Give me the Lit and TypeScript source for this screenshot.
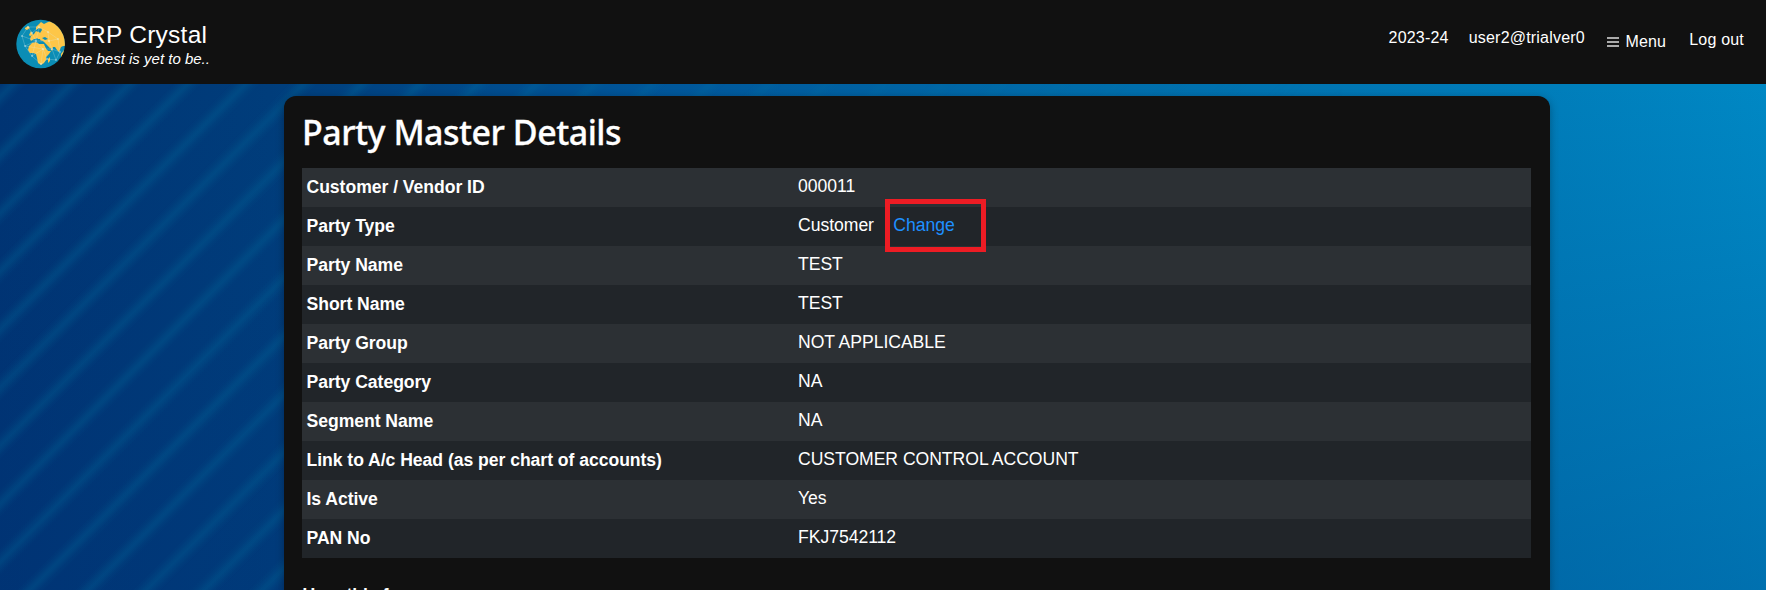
import { LitElement, html, css, svg } from "lit";
import { customElement, state } from "lit/decorators.js";

interface Field {
  label: string;
  value: string;
  action?: string;
}

@customElement("brand-globe")
class BrandGlobe extends LitElement {
  static styles = css`
    :host { display: block; width: 50px; height: 50px; flex: none; }
    svg { display: block; }
  `;

  private nodes = [
    [6, 17], [12, 8], [20, 22], [9, 27], [16, 37], [25, 45], [31, 40],
    [36, 30], [44, 33], [40, 41], [27, 30], [16, 14], [23, 8], [32, 13], [42, 20], [33, 22],
  ];

  render() {
    const links = [
      [0, 1], [0, 3], [0, 2], [1, 11], [11, 2], [11, 12], [2, 3], [3, 4], [4, 5], [5, 6], [6, 10],
      [10, 2], [10, 7], [7, 8], [8, 9], [9, 6], [2, 4], [4, 10], [12, 13], [13, 14], [14, 8],
      [13, 15], [15, 7], [15, 2], [1, 12], [3, 10], [7, 9], [14, 15], [12, 2], [5, 10],
    ];
    return html`<svg width="50" height="50" viewBox="0 0 50 50">
      <defs><clipPath id="disc"><circle cx="24.6" cy="25" r="24.3" /></clipPath></defs>
      <g clip-path="url(#disc)">
        <rect width="50" height="50" fill="#0b8db5" />
        <g fill="#fdc648">
          <path d="M22 6 25 3 28 5 32 3 38 1 50 10V27L47 27 45 28 43 33 41 31 39 28 37 28 36 32 33 28 30 25 29 24 25 23 24 20 21 20 18 20 15 22 14 20 15 17 18 15 20 12 22 13 24 10 23 9 20 11 20 8Z" />
          <path d="M13 27 16 24 20 23 23 25 28 25 30 29 32 32 35 32 33 35 30 38 30 41 28 44 25 46 22 44 21 39 20 35 17 34 14 34 12 31Z" />
          <path d="M32 40 34 38 34 42 32 44Z" />
          <path d="M45 35 48 31 48 37 45 41Z" />
          <path d="M9 9 12 7 14 9 11 11 9 10Z" />
          <path d="M13 16 15 12 17 16 14 17Z" />
        </g>
        <g fill="#0b8db5">
          <path d="M18 21 21 19 23 21 27 22 29 24 24 24 20 23Z" />
          <path d="M26 19 29 18 32 20 29 21Z" />
          <path d="M28 25 32 30 36 29 34 31 31 31Z" />
          <path d="M22 12 25 9 26 11 24 14Z" />
        </g>
        <g stroke="#d9eff0" stroke-width=".45" opacity=".55">
          ${links.map(([a, b]) => svg`<line
            x1=${this.nodes[a][0]} y1=${this.nodes[a][1]}
            x2=${this.nodes[b][0]} y2=${this.nodes[b][1]} />`)}
        </g>
        <g fill="#e9fafa" opacity=".75">
          ${this.nodes.map(([x, y]) => svg`<circle cx=${x} cy=${y} r=".8" />`)}
        </g>
      </g>
    </svg>`;
  }
}

@customElement("top-bar")
class TopBar extends LitElement {
  static styles = css`
    :host {
      display: flex;
      justify-content: space-between;
      box-sizing: border-box;
      height: 84px;
      padding: 19px 22px 0 16px;
      background: #111;
      color: #fff;
    }
    .brand { display: flex; gap: 5.5px; }
    .name { font-size: 24.5px; line-height: 28px; margin-top: 2px; letter-spacing: 0.25px; }
    .tag { font-size: 15px; line-height: 18px; font-style: italic; margin-top: 1px; }
    nav { display: flex; font-size: 16px; line-height: 20px; letter-spacing: 0.2px; }
    .year { margin: 9px 20px 0 0; }
    .user { margin: 9px 22px 0 0; }
    .menu { display: flex; align-items: center; align-self: flex-start; gap: 6.5px; margin: 13px 23px 0 0; }
    .bars { display: block; }
    .out { margin-top: 11px; }
  `;

  render() {
    return html`
      <div class="brand">
        <brand-globe></brand-globe>
        <div>
          <div class="name">ERP Crystal</div>
          <div class="tag">the best is yet to be..</div>
        </div>
      </div>
      <nav>
        <span class="year">2023-24</span>
        <span class="user">user2@trialver0</span>
        <span class="menu">
          <svg class="bars" width="12" height="10" viewBox="0 0 12 10">
            <path d="M0 1h12M0 5h12M0 9h12" stroke="#aaa" stroke-width="2" />
          </svg>
          <span>Menu</span>
        </span>
        <span class="out">Log out</span>
      </nav>
    `;
  }
}

@customElement("app-root")
class AppRoot extends LitElement {
  static styles = css`
    :host {
      display: block;
      position: relative;
      height: 590px;
      overflow: hidden;
      font-family: "Liberation Sans", Arial, sans-serif;
      background:
        linear-gradient(to bottom, rgba(0, 50, 120, 0) 84px, rgba(0, 50, 120, 0.27) 590px),
        linear-gradient(to right, #003473 0, #003d7b 270px, #00569a 650px, #006ba9 1050px, #007bb8 1500px, #0088c4 1766px);
    }
    .stripes {
      position: absolute;
      inset: 0;
      background: repeating-linear-gradient(135deg,
        rgba(0, 120, 165, 0) 0, rgba(0, 120, 165, 0) 17px,
        rgba(0, 120, 165, 0.07) 21px, rgba(0, 120, 165, 0.2) 25.5px,
        rgba(0, 120, 165, 0.24) 27.5px, rgba(0, 120, 165, 0.2) 29.5px,
        rgba(0, 120, 165, 0.07) 34px, rgba(0, 120, 165, 0) 38px, rgba(0, 120, 165, 0) 41.1px);
      mask-image: linear-gradient(to right, #000 500px, transparent 1350px);
    }
    .page { position: relative; }
    .card {
      box-sizing: border-box;
      width: 1266px;
      height: 560px;
      margin: 12px auto 0 284px;
      padding: 14px 19px 0 18px;
      border-radius: 12px;
      background: #111;
      color: #fff;
      box-shadow: 0 2px 8px rgba(0, 0, 0, 0.3);
    }
    h1 {
      margin: 0 0 13px;
      font: 500 34px/45px "Noto Sans", "Open Sans", sans-serif;
      letter-spacing: -0.5px;
      white-space: nowrap;
      -webkit-text-stroke: 0.3px #fff;
    }
    .row {
      display: grid;
      grid-template-columns: 491.5px 1fr;
      height: 39px;
      padding-left: 4.5px;
      box-sizing: border-box;
      background: #212529;
      font-size: 17.6px;
      line-height: 27px;
    }
    .row:nth-child(odd) { background: #2c3034; }
    .label { font-weight: 700; padding-top: 6px; letter-spacing: -0.04px; }
    .value { padding-top: 5px; display: flex; letter-spacing: -0.04px; }
    .action {
      display: flex;
      box-sizing: border-box;
      width: 101px;
      height: 53px;
      margin: -13px 0 0 11.3px;
      padding: 8px 0 0 3px;
      border: 5px solid #ed1c24;
      color: #1e90ff;
      position: relative;
      text-decoration: none;
    }
    .next { margin: 23.5px 0 0 0.5px; font-size: 17.6px; line-height: 27px; font-weight: 700; }
  `;

  @state() private fields: Field[] = [
    { label: "Customer / Vendor ID", value: "000011" },
    { label: "Party Type", value: "Customer", action: "Change" },
    { label: "Party Name", value: "TEST" },
    { label: "Short Name", value: "TEST" },
    { label: "Party Group", value: "NOT APPLICABLE" },
    { label: "Party Category", value: "NA" },
    { label: "Segment Name", value: "NA" },
    { label: "Link to A/c Head (as per chart of accounts)", value: "CUSTOMER CONTROL ACCOUNT" },
    { label: "Is Active", value: "Yes" },
    { label: "PAN No", value: "FKJ7542112" },
  ];

  render() {
    return html`
      <div class="stripes"></div>
      <div class="page">
        <top-bar></top-bar>
        <main class="card">
          <h1>Party Master Details</h1>
          <div>
            ${this.fields.map((f) => html`
              <div class="row">
                <span class="label">${f.label}</span>
                <span class="value">${f.value}${f.action
                  ? html`<a class="action">${f.action}</a>` : ""}</span>
              </div>`)}
          </div>
          <p class="next">User this f</p>
        </main>
      </div>
    `;
  }
}
